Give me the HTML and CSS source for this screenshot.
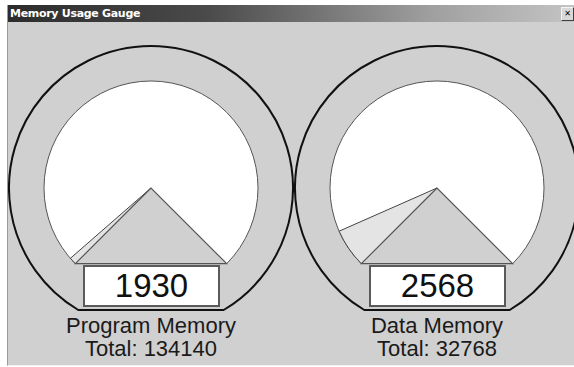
FILE: index.html
```html
<!DOCTYPE html>
<html>
<head>
<meta charset="utf-8">
<link rel="stylesheet" href="styles.css">
</head>
<body>
<div class="window">
  <div class="titlebar">
    <span class="title">Memory Usage Gauge</span>
    <span class="close">&#x2715;</span>
  </div>
  <div class="gauges">
    <div class="gauge">
      <div class="dial">
        <svg width="286" height="292" viewBox="0 0 286 292">
          <path class="outer" d="M70.3 288 A142 142 0 1 1 215.7 288 Z"/>
          <path class="face" d="M143 166 L67.34 241.66 A107 107 0 1 1 218.66 241.66 Z"/>
          <path class="fill" d="M143 166 L67.34 241.66 A107 107 0 0 1 62.4 236.3 Z"/>
          <path class="base" d="M143 166 L67.34 241.66 L218.66 241.66 Z"/>
        </svg>
        <div class="value">1930</div>
      </div>
      <div class="label">Program Memory</div>
      <div class="label">Total: 134140</div>
    </div>
    <div class="gauge">
      <div class="dial">
        <svg width="286" height="292" viewBox="0 0 286 292">
          <path class="outer" d="M70.3 288 A142 142 0 1 1 215.7 288 Z"/>
          <path class="face" d="M143 166 L67.34 241.66 A107 107 0 1 1 218.66 241.66 Z"/>
          <path class="fill" d="M143 166 L67.34 241.66 A107 107 0 0 1 45.1 209.2 Z"/>
          <path class="base" d="M143 166 L67.34 241.66 L218.66 241.66 Z"/>
        </svg>
        <div class="value">2568</div>
      </div>
      <div class="label">Data Memory</div>
      <div class="label">Total: 32768</div>
    </div>
  </div>
</div>
</body>
</html>
```
FILE: styles.css
```css
html, body {
  margin: 0;
  padding: 0;
  overflow: hidden;
  background: #ffffff;
}
.window {
  margin: 5px 0 0 7px;
  width: 567px;
  height: 360px;
  background: #d0d0d0;
  border-left: 1px solid #9a9a9a;
  border-bottom: 1px solid #f2f2f2;
  overflow: hidden;
}
.titlebar {
  height: 17px;
  display: flex;
  align-items: center;
  background: linear-gradient(to right, #2c2c2c 0%, #4a4a4a 35%, #a0a0a0 75%, #c4c4c4 100%);
  padding: 0 1px 0 2px;
}
.title {
  font-family: "DejaVu Sans", sans-serif;
  font-weight: bold;
  font-size: 11px;
  color: #ffffff;
  letter-spacing: -0.3px;
}
.close {
  margin-left: auto;
  width: 11px;
  height: 12px;
  background: #d8d8d8;
  border: 1px solid #f4f4f4;
  border-right-color: #404040;
  border-bottom-color: #404040;
  font-family: "DejaVu Sans", sans-serif;
  font-size: 8px;
  font-weight: bold;
  line-height: 12px;
  text-align: center;
  color: #000;
}
.gauges {
  display: flex;
}
.gauge {
  width: 286px;
  flex: none;
  display: flex;
  flex-direction: column;
  align-items: center;
}
.dial {
  position: relative;
  width: 286px;
  height: 292px;
}
.dial svg {
  display: block;
}
.outer {
  fill: #d0d0d0;
  stroke: #111;
  stroke-width: 2;
}
.face {
  fill: #ffffff;
  stroke: #555;
  stroke-width: 1;
}
.fill {
  fill: #e4e4e4;
  stroke: #444;
  stroke-width: 1;
}
.base {
  fill: #d0d0d0;
  stroke: #555;
  stroke-width: 1.2;
}
.value {
  position: absolute;
  left: 75px;
  top: 243px;
  width: 137px;
  height: 42px;
  box-sizing: border-box;
  background: #ffffff;
  border: 2px solid #5a5a5a;
  font-family: "Liberation Sans", Arial, sans-serif;
  font-size: 33px;
  line-height: 38px;
  text-align: center;
  color: #111;
}
.label {
  font-family: "Liberation Sans", Arial, sans-serif;
  font-size: 22px;
  line-height: 23px;
  color: #1a1a1a;
}
```
